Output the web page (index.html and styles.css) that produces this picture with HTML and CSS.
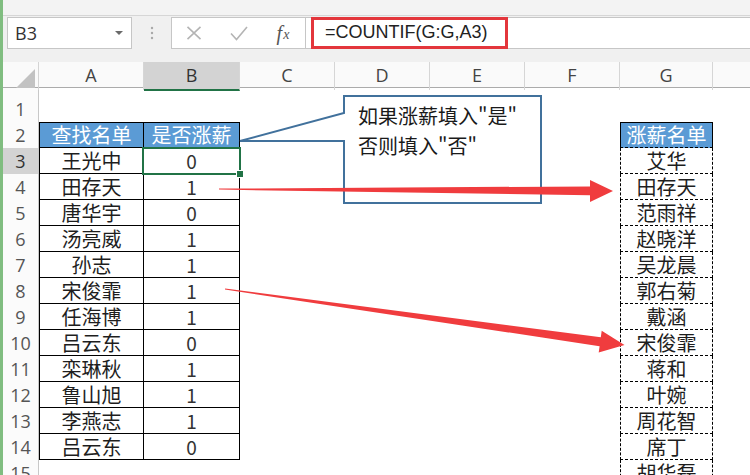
FILE: index.html
```html
<!DOCTYPE html>
<html lang="zh">
<head>
<meta charset="utf-8">
<title>COUNTIF</title>
<link rel="stylesheet" href="styles.css">
</head>
<body>
<div class="app">
  <div class="topstrip"></div>
  <div class="fbar">
    <div class="namebox"><span class="ref">B3</span><span class="dd"></span></div>
    <div class="grip">
      <svg width="4" height="14" viewBox="0 0 4 14"><circle cx="2" cy="2" r="1.2"/><circle cx="2" cy="7" r="1.2"/><circle cx="2" cy="12" r="1.2"/></svg>
    </div>
    <div class="btns">
      <span class="btn"><svg width="16" height="14" viewBox="0 0 16 14"><path d="M1.5 0.8 L14.5 13.2 M14.5 0.8 L1.5 13.2" /></svg></span>
      <span class="btn"><svg width="18" height="15" viewBox="0 0 18 15"><path d="M1 7.5 L6.5 13.5 L17 1" /></svg></span>
      <span class="btn fx"><i>f</i><i class="x">x</i></span>
    </div>
    <div class="formula">
      <div class="hl">=COUNTIF(G:G,A3)</div>
    </div>
  </div>
  <div class="sheet">
    <div class="hdr">
      <div class="corner"><span class="tri"></span></div>
      <div class="ch">A</div>
      <div class="ch sel">B</div>
      <div class="ch">C</div>
      <div class="ch">D</div>
      <div class="ch">E</div>
      <div class="ch">F</div>
      <div class="ch">G</div>
      <div class="ch last"></div>
    </div>
    <div class="row r1"><div class="rh">1</div></div>
    <div class="row"><div class="rh">2</div><div class="c a th top">查找名单</div><div class="c b th top">是否涨薪</div><div class="c g gh">涨薪名单</div></div>
    <div class="row"><div class="rh on">3</div><div class="c a">王光中</div><div class="c b n cur">0<span class="handle"></span></div><div class="c g">艾华</div></div>
    <div class="row"><div class="rh">4</div><div class="c a">田存天</div><div class="c b n">1</div><div class="c g">田存天</div></div>
    <div class="row"><div class="rh">5</div><div class="c a">唐华宇</div><div class="c b n">0</div><div class="c g">范雨祥</div></div>
    <div class="row"><div class="rh">6</div><div class="c a">汤亮威</div><div class="c b n">1</div><div class="c g">赵晓洋</div></div>
    <div class="row"><div class="rh">7</div><div class="c a">孙志</div><div class="c b n">1</div><div class="c g">吴龙晨</div></div>
    <div class="row"><div class="rh">8</div><div class="c a">宋俊霏</div><div class="c b n">1</div><div class="c g">郭右菊</div></div>
    <div class="row"><div class="rh">9</div><div class="c a">任海博</div><div class="c b n">1</div><div class="c g">戴涵</div></div>
    <div class="row"><div class="rh">10</div><div class="c a">吕云东</div><div class="c b n">0</div><div class="c g">宋俊霏</div></div>
    <div class="row"><div class="rh">11</div><div class="c a">栾琳秋</div><div class="c b n">1</div><div class="c g">蒋和</div></div>
    <div class="row"><div class="rh">12</div><div class="c a">鲁山旭</div><div class="c b n">1</div><div class="c g">叶婉</div></div>
    <div class="row"><div class="rh">13</div><div class="c a">李燕志</div><div class="c b n">1</div><div class="c g">周花智</div></div>
    <div class="row"><div class="rh">14</div><div class="c a">吕云东</div><div class="c b n">0</div><div class="c g">席丁</div></div>
    <div class="row"><div class="rh">15</div><div class="c g">胡华磊</div></div>
  </div>
</div>

<svg class="overlay" width="750" height="475" viewBox="0 0 750 475">
  <path class="callout" d="M344 96 H541 V203 H344 V141 L240 141 L344 113 Z"/>
  <polygon class="arrow" points="219,188.6 590,186.4 590,180 613,191 590,202 590,195.2 219,189.6"/>
  <polygon class="arrow" points="225.1,288.5 600.8,337.2 601.7,330.8 624.5,345 598.7,352.6 599.6,346.2 224.9,289.5"/>
</svg>
<div class="callout-text">如果涨薪填入"是"<br>否则填入"否"</div>
</body>
</html>
```

FILE: styles.css
```css
html, body {
  margin: 0;
  padding: 0;
}
body {
  width: 750px;
  height: 475px;
  overflow: hidden;
  position: relative;
  background: #ffffff;
  font-family: "Noto Sans CJK SC", "Liberation Sans", sans-serif;
  color: #222;
}
.app {
  height: 475px;
  border-left: 3px solid #80bd80;
  box-sizing: border-box;
  display: flex;
  flex-direction: column;
}
.topstrip {
  height: 15px;
  flex: none;
  background: #f3f3f3;
  border-bottom: 1px solid #d6d6d6;
}
.fbar {
  height: 46px;
  flex: none;
  box-sizing: border-box;
  background: #f0f0f0;
  padding-top: 1px;
  display: flex;
  align-items: flex-start;
}
.namebox {
  margin-left: 4px;
  width: 125px;
  height: 32px;
  box-sizing: border-box;
  background: #fff;
  border: 1px solid #c6c6c6;
  display: flex;
  align-items: center;
  justify-content: space-between;
  padding: 0 8px 0 7px;
}
.ref {
  font-family: "Open Sans", "Liberation Sans", sans-serif;
  font-size: 18px;
  color: #333;
}
.dd {
  width: 0;
  height: 0;
  border-left: 4px solid transparent;
  border-right: 4px solid transparent;
  border-top: 4px solid #6a6a6a;
}
.grip {
  width: 39px;
  height: 32px;
  display: flex;
  align-items: center;
  justify-content: center;
}
.grip svg {
  fill: #a8a8a8;
}
.btns {
  width: 135px;
  height: 32px;
  box-sizing: border-box;
  background: #fff;
  border: 1px solid #c6c6c6;
  display: grid;
  grid-template-columns: 44px 45px 44px;
  align-items: center;
  justify-items: center;
}
.btn {
  display: flex;
  align-items: center;
  justify-content: center;
}
.btn svg path {
  fill: none;
  stroke: #b4b4b4;
  stroke-width: 1.6;
}
.fx {
  font-family: "Liberation Serif", serif;
  font-size: 20px;
  color: #555;
  line-height: 1;
}
.fx .x {
  font-size: 14px;
  margin-left: 1px;
  position: relative;
  top: 2px;
}
.formula {
  flex: 1;
  height: 32px;
  box-sizing: border-box;
  background: #fff;
  border-top: 1px solid #c6c6c6;
  border-bottom: 1px solid #c6c6c6;
  padding-left: 5px;
  display: flex;
}
.hl {
  width: 197px;
  height: 32px;
  margin-top: -1px;
  box-sizing: border-box;
  border: 3px solid #e3363c;
  padding-left: 11px;
  font-family: "Liberation Sans", sans-serif;
  font-size: 18px;
  line-height: 25px;
  color: #222;
  white-space: nowrap;
}
.sheet {
  flex: 1;
  overflow: hidden;
}
.hdr, .row {
  display: grid;
  grid-template-columns: 36px 105px 96px 95px 95px 95px 95px 93px 1fr;
}
.hdr {
  height: 26px;
  background: #fafafa;
  border-bottom: 1px solid #ababab;
  box-sizing: border-box;
}
.corner {
  border-right: 1px solid #d4d4d4;
  position: relative;
}
.tri {
  position: absolute;
  right: 3px;
  bottom: 2px;
  width: 19px;
  height: 19px;
  background: #c2c2c2;
  clip-path: polygon(100% 0, 100% 100%, 0 100%);
}
.ch {
  border-right: 1px solid #d6d6d6;
  font-family: "Open Sans", "Liberation Sans", sans-serif;
  font-size: 18px;
  color: #444;
  text-align: center;
  line-height: 27px;
}
.ch.sel {
  background: #d3d3d3;
  border-bottom: 2px solid #217346;
  color: #333;
  margin-bottom: -1px;
}
.ch.last {
  border-right: none;
}
.row {
  height: 26px;
}
.row.r1 {
  height: 34px;
}
.rh {
  grid-column: 1;
  background: #fbfbfb;
  border-right: 1px solid #c8c8c8;
  font-family: "Open Sans", "Liberation Sans", sans-serif;
  font-size: 18px;
  color: #555;
  text-align: center;
  display: flex;
  align-items: flex-end;
  justify-content: center;
  line-height: 22px;
  padding-bottom: 2px;
}
.rh.on {
  background: #d3d3d3;
  color: #333;
}
.c {
  box-sizing: border-box;
  display: flex;
  align-items: flex-end;
  justify-content: center;
  font-size: 20px;
  line-height: 22px;
  padding-bottom: 1px;
  white-space: nowrap;
  color: #1e1e1e;
}
.a {
  grid-column: 2;
  border-left: 1px solid #000;
  border-right: 1px solid #000;
  border-bottom: 1px solid #000;
}
.b {
  grid-column: 3;
  border-right: 1px solid #000;
  border-bottom: 1px solid #000;
}
.top {
  border-top: 1px solid #000;
}
.th {
  background: #5b9bd5;
  color: #fff;
}
.n {
  color: #333;
  font-size: 19px;
}
.cur {
  position: relative;
}
.cur::before {
  content: "";
  position: absolute;
  left: -2px;
  top: -1px;
  right: -2px;
  bottom: -2px;
  border: 2px solid #217346;
}
.handle {
  position: absolute;
  right: -5px;
  bottom: -5px;
  width: 6px;
  height: 6px;
  background: #217346;
  border: 1px solid #fff;
}
.g {
  grid-column: 8;
  border-left: 1px dashed #000;
  border-right: 1px dashed #000;
  border-bottom: 1px dashed #000;
}
.gh {
  background: #5b9bd5;
  color: #fff;
  border-top: 1px solid #000;
  border-left-style: solid;
  border-right-style: solid;
}
.overlay {
  position: absolute;
  left: 0;
  top: 0;
  pointer-events: none;
}
.callout {
  fill: #fff;
  stroke: #41719c;
  stroke-width: 2;
}
.arrow {
  fill: #f03c3e;
}
.callout-text {
  position: absolute;
  left: 358px;
  top: 101px;
  font-size: 20px;
  line-height: 30px;
  color: #1a1a1a;
  white-space: nowrap;
}
```
